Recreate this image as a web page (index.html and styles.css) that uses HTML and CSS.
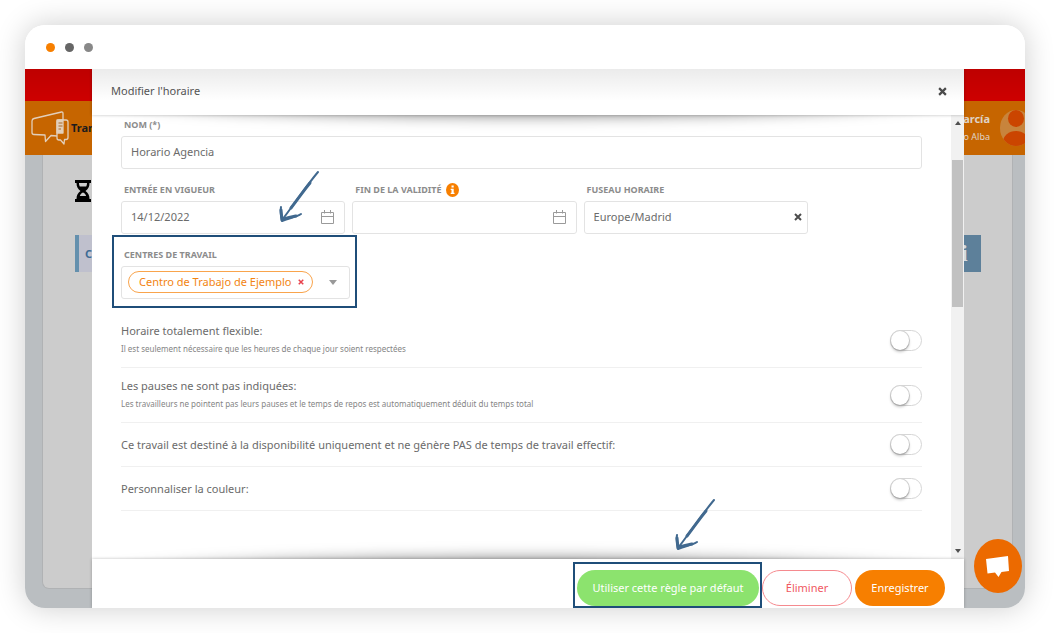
FILE: index.html
```
<!DOCTYPE html>
<html lang="fr">

<head>
    <meta charset="UTF-8">
    <meta name="viewport" content="width=device-width, initial-scale=1.0">
    <title>Modifier l'horaire</title>
    <link rel="stylesheet" href="styles.css">
</head>

<body>
    <div class="window">
        <div class="window-bar">
            <span class="dot orange"></span>
            <span class="dot dark"></span>
            <span class="dot grey"></span>
        </div>

        <div class="app">
            <!-- page behind the modal -->
            <div class="top-band"></div>
            <header class="app-header">
                <div class="brand">
                    <svg width="40" height="36" viewBox="0 0 40 36" fill="none" stroke="#e2cfbb" stroke-width="1.3" stroke-linejoin="round">
                        <path d="M32 10V3.500Q32 1.700 30.500 2L3 8.500Q1 9 1 11V22.500Q1 24.500 3 24.500L14 25L14.500 31.500L20 25.500L26 26" />
                        <path d="M32 10H35Q37 10 37 12V27.500Q37 29.500 35 29.500H33.500L33 34L29.500 30H28Q26 30 26 28V12Q26 10 28 10Z" />
                        <path d="M26 10H32V23H26Z" fill="#e2cfbb" />
                        <path d="M27.500 13H31.500M27.500 16H31.500M27.500 19H30" stroke="#a96a2a" stroke-width="1" />
                    </svg>
                    <strong>Tran</strong>
                </div>
                <div class="user">
                    <div class="user-name">
                        <strong>García</strong>
                        <span>o Alba</span>
                    </div>
                    <svg class="avatar" width="25" height="36" viewBox="0 0 25 36">
                        <defs>
                            <clipPath id="round"><ellipse cx="16" cy="18" rx="16" ry="18" /></clipPath>
                        </defs>
                        <g clip-path="url(#round)">
                            <rect width="32" height="36" fill="#c8843c" />
                            <ellipse cx="16" cy="8.500" rx="8" ry="8.500" fill="#cb4500" />
                            <ellipse cx="16" cy="32" rx="13" ry="11" fill="#cb4500" />
                        </g>
                    </svg>
                </div>
            </header>
            <main class="page">
                <div class="page-card">
                    <svg class="hourglass" width="16" height="22" viewBox="0 0 16 22">
                        <path d="M0 0H16V3H14.500C14.500 7 13 9 10.500 11C13 13 14.500 15 14.500 19H16V22H0V19H1.500C1.500 15 3 13 5.500 11C3 9 1.500 7 1.500 3H0Z" />
                        <path d="M4 3H12C12 4.500 11.700 5.500 11.200 6.500H4.800C4.300 5.500 4 4.500 4 3ZM4.800 16C5.500 14.200 6.500 13 8 12.500C9.500 13 10.500 14.200 11.200 16Z" fill="#ccc" />
                    </svg>
                    <div class="page-row">
                        <div class="row-title">C</div>
                        <div class="row-info">i</div>
                    </div>
                </div>
            </main>

            <div class="modal-layer">
                <section class="modal" role="dialog" aria-labelledby="modal-title">
                    <header class="modal-header">
                        <h1 id="modal-title">Modifier l'horaire</h1>
                        <button type="button" class="clear" aria-label="Fermer">
                            <svg width="9" height="9" viewBox="0 0 8 8"><path d="M1 1L7 7M7 1L1 7" /></svg>
                        </button>
                    </header>

                    <div class="modal-body">
                        <form class="form" id="schedule">
                            <div class="field">
                                <label for="name">NOM (*)</label>
                                <div class="control">
                                    <input type="text" id="name" value="Horario Agencia">
                                </div>
                            </div>

                            <div class="field-row">
                                <div class="field">
                                    <label for="start">ENTRÉE EN VIGUEUR</label>
                                    <div class="control">
                                        <input type="text" id="start" value="14/12/2022">
                                        <svg class="calendar" width="13" height="14" viewBox="0 0 13 14"><path d="M.5 2.500H12.500V13.500H.5ZM.5 6.500H12.500M3.500 0V3.500M9.500 0V3.500" /></svg>
                                    </div>
                                </div>
                                <div class="field">
                                    <label for="end">FIN DE LA VALIDITÉ
                                        <svg class="info" width="13" height="14" viewBox="0 0 13 14">
                                            <ellipse cx="6.500" cy="7" rx="6.500" ry="7" fill="#f77f00" />
                                            <path d="M5.500 2.500H7.700V4.500H5.500ZM4.700 5.700H7.700V9.800H8.500V11H4.700V9.800H5.500V6.900H4.700Z" fill="#fff" />
                                        </svg>
                                    </label>
                                    <div class="control">
                                        <input type="text" id="end">
                                        <svg class="calendar" width="13" height="14" viewBox="0 0 13 14"><path d="M.5 2.500H12.500V13.500H.5ZM.5 6.500H12.500M3.500 0V3.500M9.500 0V3.500" /></svg>
                                    </div>
                                </div>
                                <div class="field">
                                    <label for="zone">FUSEAU HORAIRE</label>
                                    <div class="control narrow-end">
                                        <select id="zone">
                                            <option>Europe/Madrid</option>
                                        </select>
                                        <button type="button" class="clear" aria-label="Effacer">
                                            <svg width="8" height="8" viewBox="0 0 8 8"><path d="M1 1L7 7M7 1L1 7" /></svg>
                                        </button>
                                    </div>
                                </div>
                            </div>

                            <div class="field centers">
                                <label for="centers">CENTRES DE TRAVAIL</label>
                                <div class="control">
                                    <span class="chip">Centro de Trabajo de Ejemplo
                                        <button type="button" class="clear" aria-label="Retirer">
                                            <svg width="6" height="6" viewBox="0 0 8 8"><path d="M1 1L7 7M7 1L1 7" /></svg>
                                        </button>
                                    </span>
                                    <button type="button" class="caret" id="centers" aria-label="Centres de travail"></button>
                                </div>
                                <svg class="arrow" width="42" height="56" viewBox="0 0 42 56">
                                    <path d="M40 2C35 8 29 16 24 23C17 32 11 41 4 50M3 37C2 42 3 47 4 51C10 48 17 48 23 44" />
                                    <path class="thick" d="M32 13C26 20 20 29 13 38M3 40L4 50C9 47 14 47 18 46" />
                                </svg>
                            </div>

                            <div class="options">
                                <div class="option">
                                    <label for="flexible">Horaire totalement flexible:
                                        <small>Il est seulement nécessaire que les heures de chaque jour soient respectées</small>
                                    </label>
                                    <input type="checkbox" id="flexible">
                                </div>
                                <div class="option">
                                    <label for="breaks">Les pauses ne sont pas indiquées:
                                        <small>Les travailleurs ne pointent pas leurs pauses et le temps de repos est automatiquement déduit du temps total</small>
                                    </label>
                                    <input type="checkbox" id="breaks">
                                </div>
                                <div class="option">
                                    <label for="available">Ce travail est destiné à la disponibilité uniquement et ne génère PAS de temps de travail effectif:</label>
                                    <input type="checkbox" id="available">
                                </div>
                                <div class="option">
                                    <label for="color">Personnaliser la couleur:</label>
                                    <input type="checkbox" id="color">
                                </div>
                            </div>
                        </form>

                        <div class="scrollbar" aria-hidden="true">
                            <span class="scroll-up"></span>
                            <span class="scroll-thumb"></span>
                            <span class="scroll-down"></span>
                        </div>
                    </div>

                    <footer class="modal-footer">
                        <div class="marked">
                            <button type="button" class="btn green">Utiliser cette règle par défaut</button>
                            <svg class="arrow" width="42" height="56" viewBox="0 0 42 56">
                                <path d="M40 2C35 8 29 16 24 23C17 32 11 41 4 50M3 37C2 42 3 47 4 51C10 48 17 48 23 44" />
                                <path class="thick" d="M32 13C26 20 20 29 13 38M3 40L4 50C9 47 14 47 18 46" />
                            </svg>
                        </div>
                        <button type="button" class="btn red">Éliminer</button>
                        <button type="submit" form="schedule" class="btn orange">Enregistrer</button>
                    </footer>
                </section>
            </div>

            <button type="button" class="chat" aria-label="Chat">
                <svg width="24" height="22" viewBox="0 0 24 22"><path d="M0 4L22 1L23 16L15.500 17L12.500 22L9 17.500L1.500 18.500Z" fill="#fff" /></svg>
            </button>
        </div>
    </div>
</body>

</html>
```
FILE: styles.css
```
* {
    box-sizing: border-box;
}

body {
    margin: 0;
    min-height: 100vh;
    padding: 25px 36px 25px 25px;
    display: flex;
    background: #fff;
    font-family: "Noto Sans", "Open Sans", sans-serif;
    font-size: 11px;
    line-height: 18px;
    color: #6b6b6b;
}

button,
input,
select {
    font: inherit;
    color: inherit;
}

button {
    padding: 0;
    border: 0;
    background: none;
    cursor: pointer;
}

.window {
    flex: 1;
    display: flex;
    flex-direction: column;
    border-radius: 20px;
    box-shadow: 0 0 30px rgba(0, 0, 0, 0.2);
}

.window-bar {
    display: flex;
    align-items: center;
    gap: 10px;
    height: 44px;
    padding: 0 21px;
    background: #fff;
    border-radius: 20px 20px 0 0;
}

.dot {
    width: 9px;
    height: 9px;
    border-radius: 50%;
}

.dot.orange {
    background: #f77f00;
}

.dot.dark {
    background: #666;
}

.dot.grey {
    background: #888;
}

.app {
    flex: 1;
    position: relative;
    display: flex;
    flex-direction: column;
    overflow: hidden;
    border-radius: 0 0 20px 20px;
    background: #babec1;
}

/* shade cast by the window bar */
.app::after {
    content: "";
    position: absolute;
    z-index: 2;
    inset: 0 0 auto;
    height: 32px;
    background: linear-gradient(rgba(0, 0, 0, 0.08), transparent);
    pointer-events: none;
}

.top-band {
    height: 32px;
    background: #ce0000;
}

.app-header {
    display: flex;
    justify-content: space-between;
    align-items: center;
    height: 54px;
    background: #c66500;
}

.brand {
    display: flex;
    align-items: center;
    padding-left: 6px;
    color: #1c1c1c;
}

.user {
    display: flex;
    align-items: center;
    gap: 10px;
    color: #dfd3c6;
}

.user-name {
    display: flex;
    flex-direction: column;
    text-align: right;
    font-size: 9px;
}

.user-name strong {
    font-size: 11px;
}

.page {
    flex: 1;
    display: flex;
    padding: 0 12px 19px 17px;
}

.page-card {
    flex: 1;
    padding: 25px 31px 0 32px;
    background: #ccc;
    border: 1px solid #b0b2b4;
    border-top: 0;
    border-radius: 0 0 7px 7px;
}

.hourglass {
    display: block;
}

.page-row {
    display: flex;
    margin-top: 33px;
    height: 37px;
    line-height: 37px;
    font-weight: bold;
}

.row-title {
    flex: 1;
    padding-left: 6px;
    border-left: 4px solid #6490ad;
    background: #bfc0cd;
    color: #3c6a94;
}

.row-info {
    width: 20px;
    background: #5d809a;
    color: #d6dce0;
    font-family: "Liberation Serif", serif;
    font-size: 24px;
}

.modal-layer {
    position: absolute;
    z-index: 1;
    inset: 0;
    display: flex;
    padding: 0 61px 0 67px;
}

.modal {
    flex: 1;
    min-width: 0;
    display: flex;
    flex-direction: column;
    background: #fff;
}

.modal-header,
.modal-footer {
    position: relative;
    z-index: 1;
    display: flex;
    align-items: center;
    background: #fff;
    box-shadow: 0 0 3px rgba(0, 0, 0, 0.25);
}

.modal-header {
    justify-content: space-between;
    height: 46px;
    padding: 0 17px 2px 19px;
}

.modal-header h1 {
    margin: 0;
    font-size: 11px;
    font-weight: normal;
    color: #555;
}

.modal-body {
    position: relative;
    flex: 1;
    display: flex;
    overflow: hidden;
}

/* curved shadows under the header and over the footer */
.modal-body::before,
.modal-body::after {
    content: "";
    position: absolute;
    left: 10px;
    right: 10px;
    height: 40px;
    border-radius: 50%;
    box-shadow: 0 0 15px rgba(0, 0, 0, 0.55);
    pointer-events: none;
}

.modal-body::before {
    top: -40px;
}

.modal-body::after {
    bottom: -40px;
}

.form {
    flex: 1;
    padding: 1px 29px 0;
}

.field {
    margin-bottom: 12px;
}

.field label {
    display: flex;
    align-items: center;
    gap: 4px;
    height: 20px;
    padding: 0 0 2px 3px;
    font-size: 9px;
    font-weight: bold;
    color: #8c8c8c;
}

.field-row {
    display: grid;
    grid-template-columns: repeat(3, 28%);
    gap: 7px;
}

.control {
    display: flex;
    align-items: center;
    height: 33px;
    padding: 0 10px 1px 9px;
    border: 1px solid #e3e3e3;
    border-radius: 3px;
}

.control.narrow-end {
    padding-right: 4px;
}

.control input,
.control select {
    flex: 1;
    min-width: 0;
    padding: 0;
    border: 0;
    outline: 0;
    background: none;
    appearance: none;
}

.calendar {
    fill: none;
    stroke: #9a9a9a;
}

.clear {
    display: flex;
    justify-content: center;
    width: 10px;
}

.clear svg {
    stroke: #4c4c4c;
    stroke-width: 2;
}

.centers {
    position: relative;
    width: 229px;
}

.centers .control {
    padding: 0 12px 1px 6px;
    justify-content: space-between;
}

.centers::before {
    content: "";
    position: absolute;
    inset: -11px -7px -9px -9px;
    border: 2px solid #1f4e79;
    pointer-events: none;
}

.chip {
    display: flex;
    align-items: center;
    gap: 5px;
    height: 22px;
    padding: 0 6px 0 10px;
    border: 1px solid #f9a44c;
    border-radius: 11px;
    color: #f28412;
    white-space: nowrap;
}

.chip .clear svg {
    stroke: #e8414c;
}

.caret {
    border: 4px solid transparent;
    border-top: 5px solid #999;
    border-bottom: 0;
}

.arrow {
    position: absolute;
    fill: none;
    stroke: #41698f;
    stroke-width: 2;
    stroke-linecap: round;
    stroke-linejoin: round;
    pointer-events: none;
}

.arrow .thick {
    stroke-width: 3;
}

.centers .arrow {
    left: 157px;
    top: -76px;
}

.options {
    margin-top: 14px;
}

.option {
    display: flex;
    align-items: center;
    justify-content: space-between;
    min-height: 44px;
    padding: 9px 0;
    border-bottom: 1px solid #f0f0f0;
}

.option small {
    display: block;
    font-size: 8px;
    line-height: 18px;
    color: #858585;
}

.option input {
    appearance: none;
    display: flex;
    width: 32px;
    height: 21px;
    margin: 0;
    border: 1px solid #d6d6d6;
    border-radius: 11px;
    background: #fff;
}

.option input::before {
    content: "";
    width: 18px;
    height: 19px;
    border-radius: 50%;
    background: #fff;
    box-shadow: 0 2px 3px rgba(0, 0, 0, 0.25), 0 0 0 1px #d6d6d6;
}

.scrollbar {
    display: flex;
    flex-direction: column;
    align-items: center;
    width: 13px;
    padding: 6px 0;
    background: #f1f1f1;
}

.scroll-up,
.scroll-down {
    border: 3px solid transparent;
}

.scroll-up {
    border-top: 0;
    border-bottom: 4px solid #505050;
}

.scroll-down {
    margin-top: auto;
    border-bottom: 0;
    border-top: 4px solid #505050;
}

.scroll-thumb {
    width: 11px;
    height: 34%;
    margin-top: 35px;
    background: #c1c1c1;
}

.modal-footer {
    justify-content: flex-end;
    gap: 3px;
    height: 49px;
    padding: 9px 19px 0 0;
}

.btn {
    height: 36px;
    padding: 0 14px;
    border-radius: 18px;
    min-width: 90px;
}

.btn.green {
    min-width: 182px;
    background: #8ce36e;
    color: #fff;
}

.btn.red {
    border: 1px solid #f58a8f;
    color: #f0595f;
}

.btn.orange {
    background: #f77f00;
    color: #fff;
}

.marked {
    position: relative;
}

.marked::before {
    content: "";
    position: absolute;
    inset: -8px -3px -2px -4px;
    border: 2px solid #1f4e79;
    pointer-events: none;
}

.marked .arrow {
    left: 97px;
    top: -72px;
}

.chat {
    position: absolute;
    z-index: 2;
    right: 3px;
    bottom: 15px;
    display: flex;
    align-items: center;
    justify-content: center;
    width: 48px;
    height: 54px;
    border-radius: 50%;
    background: #ec6a00;
}
```
